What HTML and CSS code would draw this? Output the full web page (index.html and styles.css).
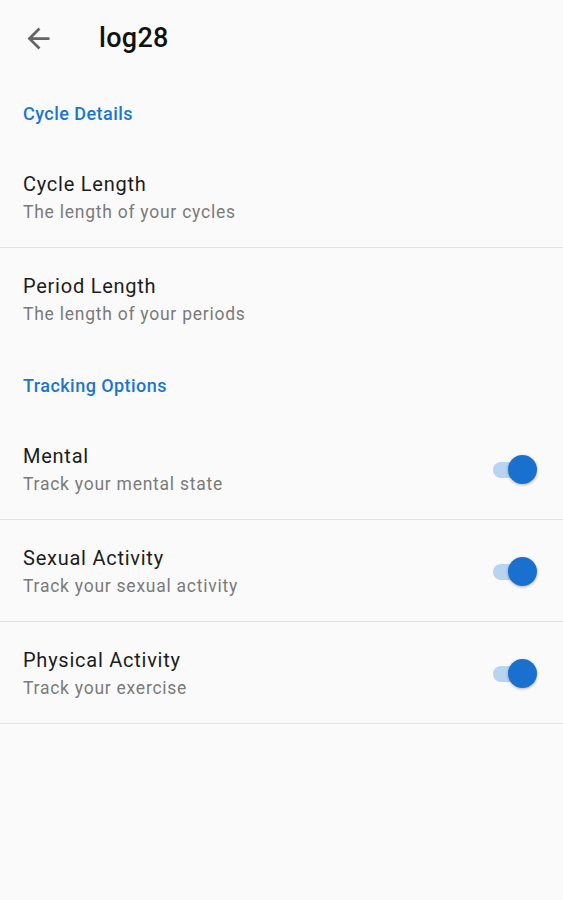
FILE: index.html
```html
<!DOCTYPE html>
<html lang="en">
<head>
    <meta charset="UTF-8">
    <meta name="viewport" content="width=device-width, initial-scale=1.0">
    <title>log28</title>
    <link rel="stylesheet" href="styles.css">
</head>
<body>
    <header class="toolbar">
        <svg class="back" viewBox="0 0 24 24" aria-hidden="true">
            <path d="M20 11H7.83l5.59-5.59L12 4l-8 8 8 8 1.41-1.41L7.83 13H20v-2z"/>
        </svg>
        <div class="title">log28</div>
    </header>

    <div class="category">Cycle Details</div>
    <div class="pref divided">
        <div class="text">
            <div class="pref-title">Cycle Length</div>
            <div class="pref-sub">The length of your cycles</div>
        </div>
    </div>
    <div class="pref last">
        <div class="text">
            <div class="pref-title">Period Length</div>
            <div class="pref-sub">The length of your periods</div>
        </div>
    </div>

    <div class="category">Tracking Options</div>
    <div class="pref divided">
        <div class="text">
            <div class="pref-title">Mental</div>
            <div class="pref-sub">Track your mental state</div>
        </div>
        <div class="switch"><span class="track"></span><span class="thumb"></span></div>
    </div>
    <div class="pref divided">
        <div class="text">
            <div class="pref-title">Sexual Activity</div>
            <div class="pref-sub">Track your sexual activity</div>
        </div>
        <div class="switch"><span class="track"></span><span class="thumb"></span></div>
    </div>
    <div class="pref divided">
        <div class="text">
            <div class="pref-title">Physical Activity</div>
            <div class="pref-sub">Track your exercise</div>
        </div>
        <div class="switch"><span class="track"></span><span class="thumb"></span></div>
    </div>
</body>
</html>
```

FILE: styles.css
```css
*{
    box-sizing: border-box;
}
body{
    margin: 0;
    min-height: 900px;
    background-color: #fafafa;
    font-family: Roboto, "Noto Sans", sans-serif;
    color: #212121;
}
.toolbar{
    height: 76px;
    display: flex;
    align-items: center;
    padding-left: 22px;
}
.back{
    width: 33px;
    height: 33px;
    fill: #666666;
}
.title{
    margin-left: 44px;
    font-size: 27px;
    font-weight: 500;
    letter-spacing: 0.3px;
    color: #111;
}
.category{
    height: 70px;
    padding: 28px 23px 0;
    line-height: 20px;
    font-size: 18px;
    font-weight: 500;
    letter-spacing: 0.45px;
    color: #1976d2;
}
.pref{
    height: 102px;
    display: flex;
    align-items: center;
    padding: 0 26px 0 23px;
}
.pref.last{
    height: 100px;
}
.pref.divided{
    border-bottom: 1px solid #e2e2e2;
}
.pref .text{
    flex: 1;
    padding-top: 3px;
}
.pref-title{
    font-size: 20px;
    line-height: 24px;
    letter-spacing: 0.75px;
    color: #1c1c1c;
}
.pref-sub{
    margin-top: 4px;
    font-size: 17.5px;
    line-height: 24px;
    letter-spacing: 0.75px;
    color: #7a7a7a;
}

/* switch */
.switch{
    position: relative;
    width: 44px;
    height: 29px;
    margin-top: 1px;
}
.switch .track{
    position: absolute;
    left: 0;
    top: 7px;
    width: 37px;
    height: 16px;
    border-radius: 8px;
    background-color: #b9d4f0;
}
.switch .thumb{
    position: absolute;
    right: 0;
    top: 0;
    width: 29px;
    height: 29px;
    border-radius: 50%;
    background-color: #1a70cf;
    box-shadow: 0 1px 3px rgba(0,0,0,0.3);
}
```
